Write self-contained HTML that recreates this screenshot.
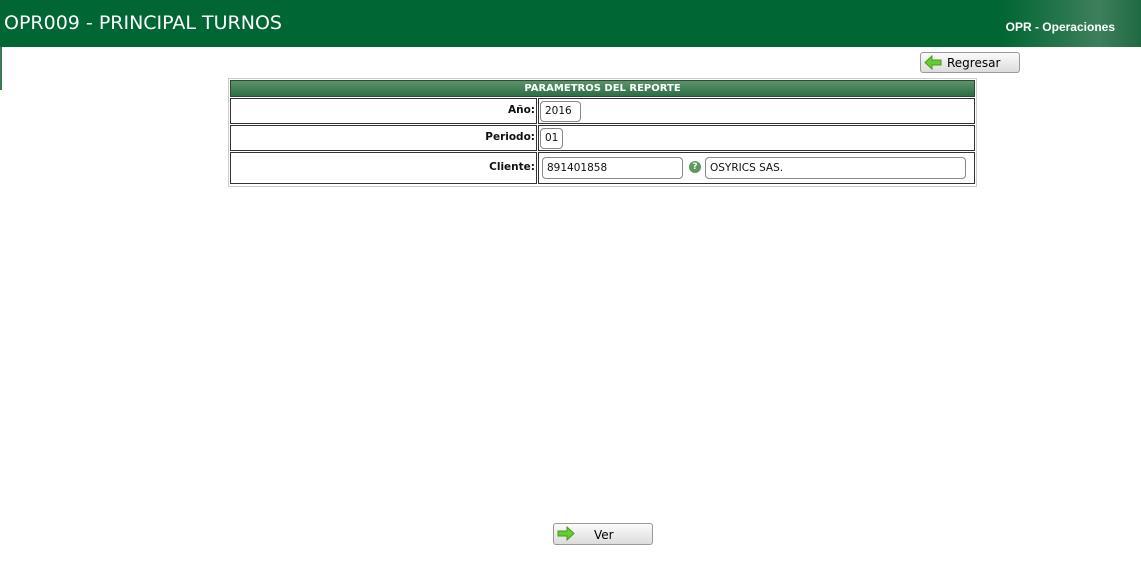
<!DOCTYPE html>
<html><head><meta charset="utf-8"><style>
body{margin:0;width:1141px;height:572px;background:#fff;position:relative;overflow:hidden;font-family:Tahoma,"DejaVu Sans",sans-serif}
.a{position:absolute;box-sizing:border-box}
.hdr{left:0;top:0;width:1141px;height:47px;background:#006633}
.title{left:4px;top:12px;color:#fff;font-size:19px;white-space:nowrap}
.sub{right:26px;top:20px;color:#fff;font-size:12px;font-weight:bold;font-family:"Liberation Sans",sans-serif}
.btn{border:1px solid #999;border-radius:3px;background:linear-gradient(#fbfbfb,#dcdcdc);font-size:12px;color:#111}
.cell{border:1px solid #333;background:#fff}
.lbl{font-size:10.5px;font-weight:bold;text-align:right;color:#111}
.inp{border:1px solid #888;border-radius:4px;background:#fff;font-size:10.5px;padding-left:4px;color:#111}
</style></head><body>
<div class="a hdr"></div>
<div class="a" style="left:1000px;top:0;width:141px;height:47px;background:linear-gradient(90deg,#006633,#3d7f5c 70%,#1f6a43)"></div>
<div class="a title">OPR009 - PRINCIPAL TURNOS</div>
<div class="a sub">OPR - Operaciones</div>
<div class="a" style="left:0;top:47px;width:2px;height:43px;background:#3a7a55"></div>

<div class="a btn" style="left:920px;top:52px;width:100px;height:21px"></div>
<svg class="a" style="left:924px;top:55px" width="18" height="15" viewBox="0 0 18 15"><path d="M1 7.5L8 1v4h9v5H8v4z" fill="#6c3" stroke="#4a9a1a"/></svg>
<div class="a" style="left:947px;top:56px;font-size:12px">Regresar</div>

<div class="a" style="left:228px;top:78px;width:749px;height:109px;border:1px solid #ccc"></div>
<div class="a" style="left:230px;top:80px;width:745px;height:17px;background:linear-gradient(#5a9468,#2e6e45);border:1px solid #2a4a35;color:#fff;font-size:10px;font-weight:bold;text-align:center;line-height:15px">PARAMETROS DEL REPORTE</div>

<div class="a cell" style="left:230px;top:98px;width:307px;height:26px"></div>
<div class="a cell" style="left:538px;top:98px;width:437px;height:26px"></div>
<div class="a lbl" style="left:230px;top:104px;width:305px">Año:</div>
<div class="a inp" style="left:540px;top:101px;width:41px;height:21px;line-height:19px">2016</div>

<div class="a cell" style="left:230px;top:125px;width:307px;height:26px"></div>
<div class="a cell" style="left:538px;top:125px;width:437px;height:26px"></div>
<div class="a lbl" style="left:230px;top:131px;width:305px">Periodo:</div>
<div class="a inp" style="left:540px;top:128px;width:23px;height:21px;line-height:19px">01</div>

<div class="a cell" style="left:230px;top:152px;width:307px;height:32px"></div>
<div class="a cell" style="left:538px;top:152px;width:437px;height:32px"></div>
<div class="a lbl" style="left:230px;top:161px;width:305px">Cliente:</div>
<div class="a inp" style="left:542px;top:157px;width:141px;height:22px;line-height:20px">891401858</div>
<div class="a" style="left:689px;top:161px;width:12px;height:12px;border-radius:50%;background:#5a9a5a;color:#fff;font-size:9px;font-weight:bold;text-align:center;line-height:12px">?</div>
<div class="a inp" style="left:705px;top:157px;width:261px;height:22px;line-height:20px">OSYRICS SAS.</div>

<div class="a btn" style="left:553px;top:523px;width:100px;height:22px"></div>
<svg class="a" style="left:557px;top:526px" width="18" height="15" viewBox="0 0 18 15"><path d="M17 7.5L10 1v4H1v5h9v4z" fill="#6c3" stroke="#4a9a1a"/></svg>
<div class="a" style="left:594px;top:528px;font-size:12px">Ver</div>
</body></html>
